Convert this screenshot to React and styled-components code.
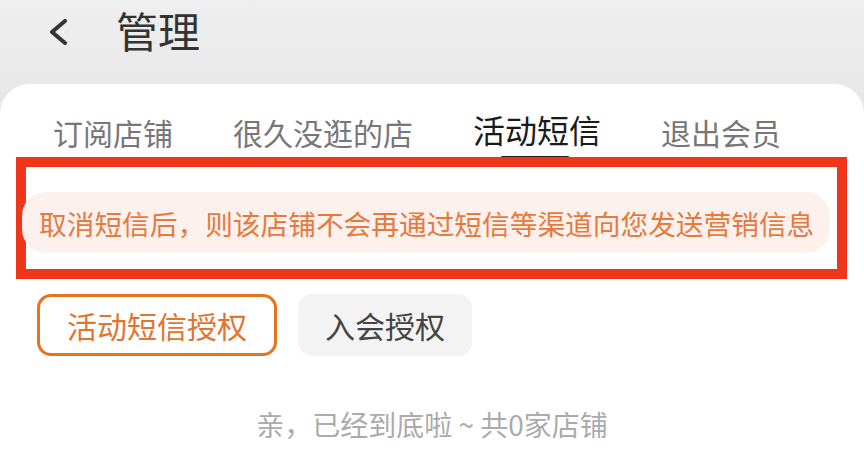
import React from "react";
import styled, { createGlobalStyle } from "styled-components";

const Global = createGlobalStyle`
  html, body { margin: 0; padding: 0; }
  body {
    width: 864px;
    height: 457px;
    overflow: hidden;
    background: #ffffff;
    font-family: "Noto Sans CJK SC", "Noto Sans", sans-serif;
  }
`;

const Page = styled.div`
  width: 864px;
  height: 457px;
  display: flex;
  flex-direction: column;
  background: linear-gradient(180deg, #efefef 0%, #e6e6e6 120px);
`;

const Header = styled.div`
  height: 84px;
  display: flex;
  align-items: center;
  padding: 0 0 24px 48px;
  box-sizing: border-box;
  gap: 48px;
`;

const Back = styled.svg`
  width: 20px;
  height: 26px;
  margin-top: 4px;
  flex: none;
`;

const Title = styled.div`
  font-size: 42px;
  line-height: 50px;
  color: #333333;
  font-weight: 400;
`;

const Card = styled.div`
  flex: 1;
  background: #ffffff;
  border-radius: 30px 30px 0 0;
  display: flex;
  flex-direction: column;
`;

const Tabs = styled.div`
  display: flex;
  align-items: flex-end;
  gap: 60px;
  padding: 20px 0 0 53px;
  height: 53px;
  box-sizing: content-box;
`;

const Tab = styled.div`
  position: relative;
  font-size: ${(p) => (p.$active ? "32px" : "30px")};
  line-height: 40px;
  color: ${(p) => (p.$active ? "#1a1a1a" : "#777777")};
  white-space: nowrap;
  height: 53px;
  display: flex;
  align-items: flex-start;
  padding-top: ${(p) => (p.$active ? "5px" : "8px")};
  box-sizing: border-box;
`;

const Underline = styled.span`
  position: absolute;
  left: 50%;
  bottom: -4px;
  width: 70px;
  height: 5px;
  margin-left: -37px;
  border-radius: 3px;
  background: #1f1f1f;
`;

const Frame = styled.div`
  margin: 0 17px 0 16px;
  border: 10px solid #f0361a;
  padding: 25px 7px 16px 0;
  position: relative;
  z-index: 1;
`;

const Notice = styled.div`
  height: 61px;
  margin-left: -4px;
  border-radius: 24px;
  background: #fdf1ed;
  display: flex;
  align-items: center;
  padding-left: 17px;
  font-size: 27.7px;
  color: #e67a3e;
  white-space: nowrap;
`;

const Actions = styled.div`
  display: flex;
  gap: 21px;
  padding: 15px 0 0 37px;
`;

const Chip = styled.div`
  height: 62px;
  box-sizing: border-box;
  display: flex;
  align-items: center;
  justify-content: center;
  padding: 0 ${(p) => (p.$active ? "27px" : "24px")};
  border-radius: 14px;
  font-size: 30px;
  border: 3px solid ${(p) => (p.$active ? "#e8731f" : "#f3f3f3")};
  background: ${(p) => (p.$active ? "#ffffff" : "#f3f3f3")};
  color: ${(p) => (p.$active ? "#e2742d" : "#444444")};
`;

const Footer = styled.div`
  text-align: center;
  padding-top: 48px;
  font-size: 28px;
  color: #ababab;
  white-space: pre;
`;

export default function App() {
  return (
    <>
      <Global />
      <Page>
        <Header>
          <Back viewBox="0 0 20 26">
            <polyline
              points="17,2 4,13 17,24"
              fill="none"
              stroke="#333"
              strokeWidth="4"
              strokeLinecap="round"
              strokeLinejoin="round"
            />
          </Back>
          <Title>管理</Title>
        </Header>
        <Card>
          <Tabs>
            <Tab>订阅店铺</Tab>
            <Tab>很久没逛的店</Tab>
            <Tab $active>
              活动短信
              <Underline />
            </Tab>
            <Tab>退出会员</Tab>
          </Tabs>
          <Frame>
            <Notice>取消短信后，则该店铺不会再通过短信等渠道向您发送营销信息</Notice>
          </Frame>
          <Actions>
            <Chip $active>活动短信授权</Chip>
            <Chip>入会授权</Chip>
          </Actions>
          <Footer>亲，已经到底啦 ~ 共0家店铺</Footer>
        </Card>
      </Page>
    </>
  );
}
